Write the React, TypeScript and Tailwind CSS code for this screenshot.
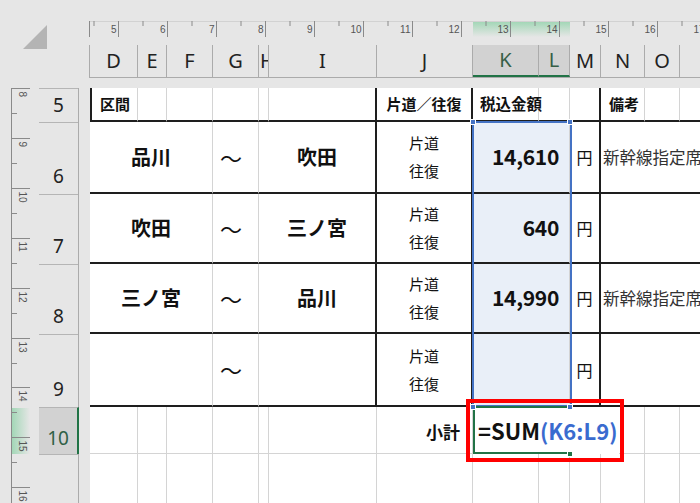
import React from 'react';

// 罫線クラス
const L = 'border-r border-r-[#d4d4d4]';
const DK = 'border-r-2 border-r-[#1e1e1e]';
const B = 'border-b-2 border-b-[#1e1e1e]';
const BL = 'border-b border-b-[#d4d4d4]';

const routes = [
  { from: '品川', to: '吹田', amount: '14,610', note: '新幹線指定席' },
  { from: '吹田', to: '三ノ宮', amount: '640', note: '' },
  { from: '三ノ宮', to: '品川', amount: '14,990', note: '新幹線指定席' },
  { from: '', to: '', amount: '', note: '' },
];

const colHeaders = [
  { label: 'D', w: 'w-[48px]' },
  { label: 'E', w: 'w-[29px]' },
  { label: 'F', w: 'w-[46px]' },
  { label: 'G', w: 'w-[46px]' },
  { label: 'H', w: 'w-[10px]' },
  { label: 'I', w: 'w-[108px]' },
  { label: 'J', w: 'w-[96px]' },
  { label: 'K', w: 'w-[66px]', active: true },
  { label: 'L', w: 'w-[31px]', active: true },
  { label: 'M', w: 'w-[31px]' },
  { label: 'N', w: 'w-[44px]' },
  { label: 'O', w: 'w-[35px]' },
  { label: '', w: 'w-[60px]' },
];

const rowHeaders = [
  { n: '5', h: 'h-[34px]', pb: 'pb-[7px]' },
  { n: '6', h: 'h-[72px]', pb: 'pb-[8px]' },
  { n: '7', h: 'h-[70px]', pb: 'pb-[8px]' },
  { n: '8', h: 'h-[70px]', pb: 'pb-[8px]' },
  { n: '9', h: 'h-[73px]', pb: 'pb-[8px]' },
  { n: '10', h: 'h-[47px]', pb: 'pb-[6px]', active: true },
];

const TopRuler = () => {
  const nums = Array.from({ length: 13 }, (_, i) => i + 5);
  return (
    <svg width={611} height={16} className="block">
      <defs>
        <linearGradient id="tg" x1="0" y1="0" x2="0" y2="1">
          <stop offset="0" stopColor="#9fd6b4" />
          <stop offset="1" stopColor="#e6e6e6" />
        </linearGradient>
      </defs>
      <rect x={384} y={0} width={97} height={16} fill="url(#tg)" />
      <line x1={0} y1={0.5} x2={611} y2={0.5} stroke="#d2d2d2" />
      <line x1={0.5} y1={0} x2={0.5} y2={16} stroke="#8a8a8a" />
      {nums.map((n) => {
        const x = Math.round(28.7 + (n - 5) * 49) + 0.5;
        return (
          <g key={n}>
            <line x1={x - 24.5} y1={0} x2={x - 24.5} y2={5} stroke="#8a8a8a" />
            <line x1={x} y1={0} x2={x} y2={16} stroke="#8a8a8a" />
            <text x={x - 2} y={12} textAnchor="end" fontSize={10} fill="#555" fontFamily="Liberation Sans, sans-serif">
              {n}
            </text>
          </g>
        );
      })}
    </svg>
  );
};

const LeftRuler = () => {
  const nums = Array.from({ length: 9 }, (_, i) => i + 8);
  return (
    <svg width={39} height={415} className="block">
      <defs>
        <linearGradient id="lg" x1="0" y1="0" x2="1" y2="0">
          <stop offset="0" stopColor="#9fd6b4" />
          <stop offset="1" stopColor="#e6e6e6" />
        </linearGradient>
      </defs>
      <rect x={11} y={320} width={19} height={46} fill="url(#lg)" />
      <line x1={11.5} y1={0} x2={11.5} y2={415} stroke="#8a8a8a" />
      {nums.map((n) => {
        const y = Math.round((n - 8) * 49.9) + 0.5;
        return (
          <g key={n}>
            <line x1={11} y1={y} x2={30} y2={y} stroke="#8a8a8a" />
            <line x1={11} y1={y + 25} x2={17} y2={y + 25} stroke="#8a8a8a" />
            <text
              transform={`translate(19 ${y + 3}) rotate(90)`}
              fontSize={10}
              fill="#555"
              fontFamily="Liberation Sans, sans-serif"
            >
              {n}
            </text>
          </g>
        );
      })}
    </svg>
  );
};

const App: React.FC = () => {
  return (
    <div className="relative w-[700px] h-[503px] overflow-hidden bg-[#e6e6e6] font-['Noto_Sans_CJK_JP',sans-serif] text-[#111]">
      {/* 上部: 角・ルーラー・列見出し */}
      <div className="flex h-[88px]">
        <div className="w-[89px] shrink-0 pl-[23px] pt-[25px]">
          <svg width={24} height={24} className="block">
            <polygon points="24,0 24,24 0,24" fill="#b4b4b4" />
          </svg>
        </div>
        <div className="flex flex-col pt-[21px]">
          <TopRuler />
          <div className="mt-[8px] flex h-[33px] border-l border-l-[#ababab] border-b border-b-[#ababab] font-['Noto_Sans',sans-serif] text-[20px]">
            {colHeaders.map((c, i) => (
              <div
                key={i}
                className={`${c.w} shrink-0 flex items-center overflow-hidden border-r border-r-[#ababab] ${
                  c.label === 'H' ? 'justify-start pl-[1px]' : 'justify-center'
                } ${c.active ? 'bg-[#d2d2d2] text-[#365f47] border-b-2 border-b-[#217346]' : 'text-[#222]'}`}
              >
                {c.label}
              </div>
            ))}
          </div>
        </div>
      </div>

      {/* 本体 */}
      <div className="flex">
        <div className="w-[39px] shrink-0">
          <LeftRuler />
        </div>
        <div className="w-[40px] shrink-0 flex flex-col border-r border-r-[#ababab] h-[415px] font-['Noto_Sans',sans-serif] text-[19px]">
          {rowHeaders.map((r) => (
            <div
              key={r.n}
              className={`${r.h} ${r.pb} shrink-0 flex items-end justify-center border-t border-t-[#b5b5b5] ${
                r.active ? 'bg-[#d2d2d2] text-[#2f6046] border-r-2 border-r-[#217346] -mr-[1px]' : 'text-[#222]'
              }`}
            >
              <span className="leading-none">{r.n}</span>
            </div>
          ))}
          <div className="flex-1 border-t border-t-[#b5b5b5]" />
        </div>
        <div className="w-[11px] shrink-0" />

        {/* シート */}
        <div className="relative grid grid-cols-[48px_29px_46px_46px_10px_108px_96px_66px_31px_31px_44px_35px_60px] grid-rows-[34px_72px_70px_70px_73px_47px_60px] bg-white">
          {/* 5行目 見出し */}
          <div className={`${L} ${B} border-l-2 border-l-[#1e1e1e] pl-[8px] flex items-center text-[15px] font-bold`}>区間</div>
          <div className={`${L} ${B}`} />
          <div className={`${L} ${B}`} />
          <div className={`${L} ${B}`} />
          <div className={`${L} ${B}`} />
          <div className={`${DK} ${B}`} />
          <div className={`${DK} ${B} flex items-center justify-center text-[15px] font-bold whitespace-nowrap`}>片道／往復</div>
          <div className={`${L} ${B} pl-[7px] flex items-center text-[15.5px] font-bold whitespace-nowrap`}>税込金額</div>
          <div className={`${L} ${B}`} />
          <div className={`${DK} ${B}`} />
          <div className={`${L} ${B} pl-[8px] flex items-center text-[15px] font-bold whitespace-nowrap`}>備考</div>
          <div className={`${L} ${B}`} />
          <div className={`${L} ${B}`} />

          {/* 6〜9行目 */}
          {routes.map((r, i) => (
            <React.Fragment key={i}>
              <div className={`col-span-3 ${L} ${B} flex items-center justify-center text-[20px] font-bold`}>{r.from}</div>
              <div className={`${L} ${B} flex items-center pl-[7px] text-[22px]`}>〜</div>
              <div className={`col-span-2 ${DK} ${B} flex items-center justify-center text-[20px] font-bold`}>{r.to}</div>
              <div className={`${DK} ${B} flex flex-col items-center justify-center text-[15px] leading-[28px]`}>
                <span>片道</span>
                <span>往復</span>
              </div>
              <div className={`col-span-2 ${L} ${B} bg-[#e9eff8] flex items-center justify-end pr-[10px] text-[21px] tracking-[-0.3px] font-bold`}>
                {r.amount}
              </div>
              <div className={`${DK} ${B} flex items-center justify-center text-[16px]`}>円</div>
              <div className={`col-span-3 ${B} flex items-center pl-[2px] overflow-hidden whitespace-nowrap text-[16.5px] text-[#333]`}>
                {r.note}
              </div>
            </React.Fragment>
          ))}

          {/* 10行目 小計 */}
          <div className={`${L} ${BL}`} />
          <div className={`${L} ${BL}`} />
          <div className={`${L} ${BL}`} />
          <div className={`${L} ${BL}`} />
          <div className={`${L} ${BL}`} />
          <div className={`${L} ${BL}`} />
          <div className={`${L} ${BL} flex items-center justify-end pr-[12px] pt-[4px] text-[17px] font-bold`}>小計</div>
          <div className={`col-span-2 relative ${L} ${BL}`}>
            {/* 編集中のセル */}
            <div className="absolute left-0 top-0 z-10 h-[47px] w-[146px] bg-white">
              <div className="absolute left-0 -top-[1px] h-[48px] w-[98px] border-l-2 border-t-2 border-b-2 border-[#217346]" />
              <div className="absolute left-[5px] top-0 h-[46px] flex items-center whitespace-nowrap text-[22px] font-bold">
                <span>=SUM</span>
                <span className="text-[#3a6bcf]">(K6:L9)</span>
              </div>
            </div>
          </div>
          <div className={`${L} ${BL}`} />
          <div className={`${L} ${BL}`} />
          <div className={`${L} ${BL}`} />
          <div className={`${L} ${BL}`} />

          {/* 11行目 */}
          {Array.from({ length: 13 }).map((_, i) => (
            <div key={i} className={L} />
          ))}
        </div>
      </div>

      {/* 選択範囲 K6:L9 */}
      <div className="pointer-events-none absolute left-[472px] top-[121px] h-[286px] w-[100px] border-2 border-[#4472c4]" />
      <div className="absolute left-[470px] top-[119px] h-[6px] w-[6px] bg-[#4472c4] border border-white" />
      <div className="absolute left-[567px] top-[119px] h-[6px] w-[6px] bg-[#4472c4] border border-white" />
      <div className="absolute left-[470px] top-[404px] z-20 h-[6px] w-[6px] bg-[#4472c4] border border-white" />
      <div className="absolute left-[567px] top-[404px] z-20 h-[6px] w-[6px] bg-[#4472c4] border border-white" />
      <div className="absolute left-[567px] top-[451px] z-20 h-[6px] w-[6px] bg-[#217346] border border-white" />

      {/* 赤枠 */}
      <div className="pointer-events-none absolute left-[466px] top-[399px] z-30 h-[63px] w-[158px] border-4 border-[#ff0000]" />
    </div>
  );
};

export default App;
